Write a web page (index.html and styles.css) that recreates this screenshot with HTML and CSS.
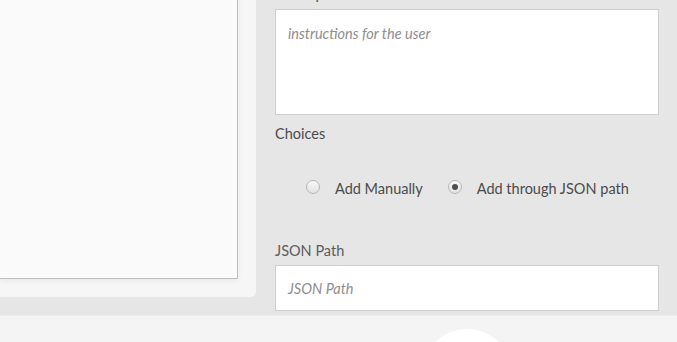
FILE: index.html
```html
<!DOCTYPE html>
<html>
<head>
<meta charset="utf-8">
<link rel="stylesheet" href="styles.css">
</head>
<body>
<div class="main">
  <div class="card">
    <div class="preview"></div>
  </div>
  <div class="form">
    <label class="label desc">Description</label>
    <div class="textarea"><span class="ph">instructions for the user</span></div>
    <div class="label choices">Choices</div>
    <div class="radios">
      <div class="radio"><span class="dot"></span><span>Add Manually</span></div>
      <div class="radio"><span class="dot on"></span><span>Add through JSON path</span></div>
    </div>
    <div class="label json">JSON Path</div>
    <div class="input"><span class="ph">JSON Path</span></div>
  </div>
</div>
<div class="footer">
  <div class="circle"></div>
</div>
</body>
</html>
```
FILE: styles.css
```css
html, body {
  margin: 0;
  padding: 0;
  height: 342px;
  overflow: hidden;
  background: #e6e6e6;
  font-family: Lato, "Open Sans", sans-serif;
  color: #4b4b4b;
}
.main {
  display: flex;
  gap: 19px;
  height: 315px;
  align-items: flex-start;
}
.card {
  width: 256px;
  height: 317px;
  margin-top: -20px;
  background: #f6f6f6;
  border-radius: 0 0 5px 0;
  box-sizing: border-box;
  padding: 0 18px 18px 0;
  display: flex;
}
.preview {
  flex: 1;
  background: #fafafa;
  border: 1px solid #bdbdbd;
  border-top: none;
  border-left: none;
  box-shadow: 0 2px 6px rgba(0,0,0,0.06);
}
.form {
  width: 384px;
  display: flex;
  flex-direction: column;
  margin-top: -12px;
}
.label {
  font-size: 14.5px;
  line-height: 20px;
}
.desc {
  height: 21px;
  line-height: 12px;
}
.textarea {
  height: 106px;
  box-sizing: border-box;
  background: #fff;
  border: 1px solid #cfcfcf;
  padding: 13px 12px;
}
.ph {
  font-style: italic;
  color: #8e8e8e;
  font-size: 14.5px;
  line-height: 20px;
}
.choices {
  margin-top: 9px;
}
.radios {
  display: flex;
  gap: 25px;
  padding-left: 31px;
  margin-top: 35px;
  font-size: 14.5px;
  line-height: 20px;
}
.radio {
  display: flex;
  align-items: center;
  gap: 15px;
}
.dot {
  width: 14px;
  height: 14px;
  box-sizing: border-box;
  border-radius: 50%;
  border: 1px solid #b5b5b5;
  background: linear-gradient(#f8f8f8, #e2e2e2);
  display: flex;
  align-items: center;
  justify-content: center;
  margin-top: -5px;
}
.dot.on::after {
  content: "";
  width: 6px;
  height: 6px;
  border-radius: 50%;
  background: #4f4f4f;
}
.json {
  margin-top: 42px;
  color: #5c5c5c;
}
.input {
  margin-top: 4px;
  height: 46px;
  box-sizing: border-box;
  background: #fff;
  border: 1px solid #cfcfcf;
  padding: 12px 12px;
}
.footer {
  height: 27px;
  background: #f4f4f4;
  overflow: hidden;
  border-top: 1px solid #ececec;
  box-sizing: border-box;
}
.circle {
  width: 90px;
  height: 90px;
  border-radius: 50%;
  background: #fff;
  margin-left: 422px;
  margin-top: 13px;
}
```
